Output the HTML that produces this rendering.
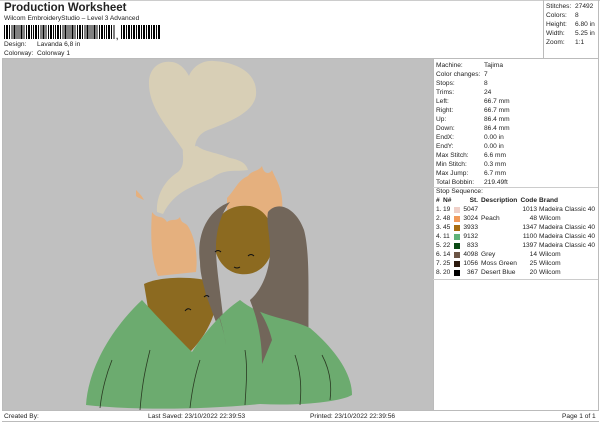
<!DOCTYPE html>
<html><head><meta charset="utf-8"><style>
*{margin:0;padding:0;box-sizing:border-box}
body{width:600px;height:424px;background:#fff;font-family:"Liberation Sans",sans-serif;color:#222;position:relative;overflow:hidden;font-size:6.6px}
.a{position:absolute;white-space:nowrap}
.bar{position:absolute;left:4px;top:25px;height:14px;width:111px;background:repeating-linear-gradient(90deg,#000 0 1px,#fff 1px 2px,#000 2px 4px,#fff 4px 5px,#000 5px 6px,#fff 6px 7.3px)}
.bar2{position:absolute;left:121px;top:25px;height:14px;width:39px;background:repeating-linear-gradient(90deg,#000 0 1px,#fff 1px 2px,#000 2px 4px,#fff 4px 5px)}
.row{position:absolute;left:436px;height:9px;width:160px;white-space:nowrap}
.row span{position:absolute;left:48px;white-space:nowrap}
.sq{position:absolute;width:6px;height:6px;top:1px;left:454px}
.t{position:absolute;white-space:nowrap}
.r{text-align:right}
.st{left:457px;width:21px}
.cd{left:513px;width:24px}
.br{left:539px}
.ds{left:481px}
</style></head><body>
<div class="a" style="left:4px;top:2px;font-size:11.5px;font-weight:bold">Production Worksheet</div>
<div class="a" style="left:4px;top:15px">Wilcom EmbroideryStudio – Level 3 Advanced</div>
<div class="bar"></div><div class="a" style="left:116px;top:32px;font-weight:bold;font-size:8px">,</div><div class="bar2"></div>
<div class="a" style="left:4px;top:41px">Design:</div><div class="a" style="left:37px;top:41px">Lavanda 6,8 in</div>
<div class="a" style="left:4px;top:50px">Colorway:</div><div class="a" style="left:37px;top:50px">Colorway 1</div>
<div class="a" style="left:0;top:0;width:600px;height:1px;background:#ccc"></div>
<div class="a" style="left:543px;top:0;width:1px;height:58px;background:#bbb"></div>
<div class="a" style="left:598px;top:0;width:1px;height:58px;background:#bbb"></div>
<div class="a" style="left:546px;top:3px">Stitches:</div><div class="a" style="left:575px;top:3px">27492</div>
<div class="a" style="left:546px;top:12px">Colors:</div><div class="a" style="left:575px;top:12px">8</div>
<div class="a" style="left:546px;top:21px">Height:</div><div class="a" style="left:575px;top:21px">6.80 in</div>
<div class="a" style="left:546px;top:30px">Width:</div><div class="a" style="left:575px;top:30px">5.25 in</div>
<div class="a" style="left:546px;top:39px">Zoom:</div><div class="a" style="left:575px;top:39px">1:1</div>
<div class="a" style="left:2px;top:58px;width:597px;height:1px;background:#bbb"></div>
<div class="a" style="left:2px;top:59px;width:1px;height:352px;background:#bbb"></div>
<div class="a" style="left:598px;top:59px;width:1px;height:352px;background:#bbb"></div>
<div class="a" style="left:3px;top:59px;width:430px;height:351px;background:#c0c0c0"></div>
<svg class="a" style="left:0;top:0" width="600" height="424" viewBox="0 0 600 424">
<path d="M183,150 C170,130 150,110 149,85 C148,68 160,60 172,62 C180,63 186,70 189,76 C193,66 203,60 214,61 C232,62 258,70 256,95 C254,112 230,122 208,130 C200,133 195,140 195,148 Z" fill="#d8cfb6"/>
<path d="M183,148 L197,146 C205,152 215,152 230,158 C240,160 246,163 248,170 C236,172 225,168 212,178 C195,186 175,190 163,214 L157,212 C156,195 165,180 178,172 C186,165 182,155 183,148 Z" fill="#d8cfb6"/>
<path d="M152,212 C158,220 162,214 167,222 C172,218 176,222 180,217 C182,226 186,220 190,230 C195,240 198,255 196,272 L158,276 C152,262 150,240 152,212 Z" fill="#e5b07e"/>
<path d="M136,190 C140,194 142,196 144,200 C140,198 138,198 136,196 Z M270,180 L274,177 L272,190 L268,184 Z" fill="#e5b07e"/>
<path d="M144,284 C160,276 195,276 214,282 C222,300 212,330 190,352 L150,320 Z" fill="#8c6a20"/>
<path d="M227,198 C235,190 238,180 248,176 C252,170 258,172 262,166 C264,175 270,174 272,170 C276,180 284,190 282,210 C276,212 270,218 268,230 C260,208 248,200 227,210 Z" fill="#e5b07e"/>
<path d="M214,234 C216,212 232,204 250,206 C268,210 276,228 272,250 C268,268 254,276 240,274 C224,272 212,256 214,234 Z" fill="#8c6a20"/>
<path d="M200,262 C196,234 208,210 230,202 C222,212 216,228 216,248 C216,270 222,300 226,345 C218,330 212,310 206,295 C204,285 200,275 200,262 Z" fill="#72665a"/>
<path d="M268,212 C278,200 296,208 304,230 C312,260 306,320 310,364 C300,350 292,336 288,320 C280,340 270,356 262,364 C262,340 258,320 250,300 C262,290 270,270 270,250 C270,236 266,222 268,212 Z" fill="#72665a"/>
<path d="M86,405 C88,370 110,330 142,300 C160,320 178,338 192,352 C205,332 222,312 240,300 C262,318 290,318 310,328 C330,345 352,370 352,395 C340,402 300,406 260,404 C200,410 130,410 86,405 Z" fill="#6cab6f"/>
<path d="M226,345 C222,320 215,300 206,295 L214,300 C218,315 224,330 226,345 Z M262,364 C262,340 258,320 250,300 C262,310 270,330 272,340 Z" fill="#72665a"/>
<g fill="none" stroke="#2a3a22" stroke-width="0.8"><path d="M100,408 C102,390 106,375 112,360 M140,410 C142,385 145,370 150,350 M190,408 C192,390 195,375 200,360 M245,405 C246,385 248,370 245,350 M300,405 C302,385 300,370 295,355 M330,400 C332,385 330,370 322,355"/></g>
<g fill="none" stroke="#111" stroke-width="1"><path d="M215,252 q3,-3 6,0 M248,256 q3,-3 6,0 M234,267 q3,2 6,0 M185,311 q3,-4 6,-1 M204,297 q3,-3 5,0"/></g>
</svg>
<div class="a" style="left:433px;top:59px;width:1px;height:352px;background:#bbb"></div>
<div class="row" style="top:62px">Machine:<span>Tajima</span></div>
<div class="row" style="top:71px">Color changes:<span>7</span></div>
<div class="row" style="top:80px">Stops:<span>8</span></div>
<div class="row" style="top:89px">Trims:<span>24</span></div>
<div class="row" style="top:98px">Left:<span>66.7 mm</span></div>
<div class="row" style="top:107px">Right:<span>66.7 mm</span></div>
<div class="row" style="top:116px">Up:<span>86.4 mm</span></div>
<div class="row" style="top:125px">Down:<span>86.4 mm</span></div>
<div class="row" style="top:134px">EndX:<span>0.00 in</span></div>
<div class="row" style="top:143px">EndY:<span>0.00 in</span></div>
<div class="row" style="top:152px">Max Stitch:<span>6.6 mm</span></div>
<div class="row" style="top:161px">Min Stitch:<span>0.3 mm</span></div>
<div class="row" style="top:170px">Max Jump:<span>6.7 mm</span></div>
<div class="row" style="top:179px">Total Bobbin:<span>219.49ft</span></div>
<div class="a" style="left:433px;top:187px;width:165px;height:1px;background:#ccc"></div>
<div class="a" style="left:436px;top:188px">Stop Sequence:</div>

<div class="a" style="left:0;top:197px;font-weight:bold;text-decoration:underline">
<span class="t" style="left:436px">#</span><span class="t" style="left:443px">N#</span><span class="t r st">St.</span><span class="t ds">Description</span><span class="t r cd">Code</span><span class="t br">Brand</span></div>

<div class="a" style="left:0;top:206px"><span class="t" style="left:436px">1.</span><span class="t" style="left:443px">19</span><span class="sq" style="background:#efd0c8"></span><span class="t r st">5047</span><span class="t r cd">1013</span><span class="t br">Madeira Classic 40</span></div>
<div class="a" style="left:0;top:215px"><span class="t" style="left:436px">2.</span><span class="t" style="left:443px">48</span><span class="sq" style="background:#f19a5a"></span><span class="t r st">3024</span><span class="t ds">Peach</span><span class="t r cd">48</span><span class="t br">Wilcom</span></div>
<div class="a" style="left:0;top:224px"><span class="t" style="left:436px">3.</span><span class="t" style="left:443px">45</span><span class="sq" style="background:#a86c10"></span><span class="t r st">3933</span><span class="t r cd">1347</span><span class="t br">Madeira Classic 40</span></div>
<div class="a" style="left:0;top:233px"><span class="t" style="left:436px">4.</span><span class="t" style="left:443px">11</span><span class="sq" style="background:#5fb37a"></span><span class="t r st">9132</span><span class="t r cd">1100</span><span class="t br">Madeira Classic 40</span></div>
<div class="a" style="left:0;top:242px"><span class="t" style="left:436px">5.</span><span class="t" style="left:443px">22</span><span class="sq" style="background:#0b4a14"></span><span class="t r st">833</span><span class="t r cd">1397</span><span class="t br">Madeira Classic 40</span></div>
<div class="a" style="left:0;top:251px"><span class="t" style="left:436px">6.</span><span class="t" style="left:443px">14</span><span class="sq" style="background:#6b5444"></span><span class="t r st">4098</span><span class="t ds">Grey</span><span class="t r cd">14</span><span class="t br">Wilcom</span></div>
<div class="a" style="left:0;top:260px"><span class="t" style="left:436px">7.</span><span class="t" style="left:443px">25</span><span class="sq" style="background:#2c1a0e"></span><span class="t r st">1056</span><span class="t ds">Moss Green</span><span class="t r cd">25</span><span class="t br">Wilcom</span></div>
<div class="a" style="left:0;top:269px"><span class="t" style="left:436px">8.</span><span class="t" style="left:443px">20</span><span class="sq" style="background:#000"></span><span class="t r st">367</span><span class="t ds">Desert Blue</span><span class="t r cd">20</span><span class="t br">Wilcom</span></div>

<div class="a" style="left:433px;top:279px;width:165px;height:1px;background:#ccc"></div>
<div class="a" style="left:2px;top:410px;width:597px;height:1px;background:#bbb"></div>
<div class="a" style="left:4px;top:413px">Created By:</div>
<div class="a" style="left:148px;top:413px">Last Saved: 23/10/2022 22:39:53</div>
<div class="a" style="left:310px;top:413px">Printed: 23/10/2022 22:39:56</div>
<div class="a" style="left:562px;top:413px">Page 1 of 1</div>
<div class="a" style="left:2px;top:421px;width:597px;height:1px;background:#bbb"></div>
</body></html>
